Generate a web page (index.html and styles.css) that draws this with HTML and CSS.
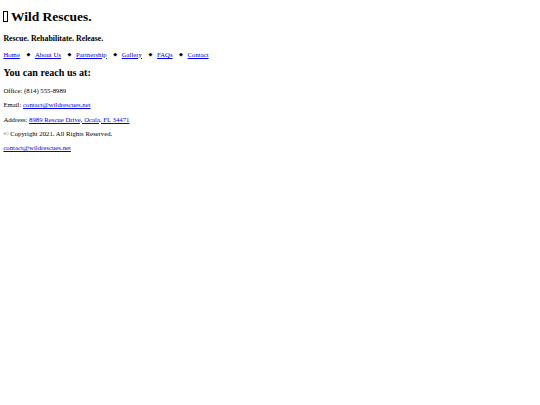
FILE: index.html
```html
<!DOCTYPE html>
<html lang="en">
<head>
<meta charset="utf-8">
<title>Wild Rescues</title>
<link rel="stylesheet" href="styles.css">
</head>
<body>
<header>
  <h1><span class="logo-icon"></span> Wild Rescues.</h1>
  <h3>Rescue. Rehabilitate. Release.</h3>
  <nav class="nav">
    <a href="#">Home</a><span class="sep">◆</span><a href="#">About Us</a><span class="sep">◆</span><a href="#">Partnership</a><span class="sep">◆</span><a href="#">Gallery</a><span class="sep">◆</span><a href="#">FAQs</a><span class="sep">◆</span><a href="#">Contact</a>
  </nav>
</header>
<main>
  <h2>You can reach us at:</h2>
  <p>Office: (814) 555-8989</p>
  <p>Email: <a href="#">contact@wildrescues.net</a></p>
  <p>Address: <a href="#">8989 Rescue Drive, Ocala, FL 34471</a></p>
</main>
<footer>
  <p>© Copyright 2021. All Rights Reserved.</p>
  <p><a href="#">contact@wildrescues.net</a></p>
</footer>
</body>
</html>
```
FILE: styles.css
```css
html {
  background: #fff;
}
body {
  margin: 3.375px;
  font-family: "Liberation Serif", "Times New Roman", serif;
  font-size: 6.75px;
  line-height: 1.149;
  color: #000;
}
h1 {
  margin-top: 6px;
}
p {
  line-height: 7.5px;
}
a {
  color: #0000ee;
}
.logo-icon {
  display: inline-block;
  width: 2.4px;
  height: 8.4px;
  border: 0.6px solid #000;
  vertical-align: -0.5px;
}
.nav {
  display: block;
  margin: 1em 0;
}
.sep {
  display: inline-block;
  width: 3px;
  margin: 0 5.5px 0 6.5px;
  text-align: center;
  font-family: "DejaVu Sans", sans-serif;
  font-size: 5px;
  line-height: 1;
  vertical-align: 0.5px;
}
```
